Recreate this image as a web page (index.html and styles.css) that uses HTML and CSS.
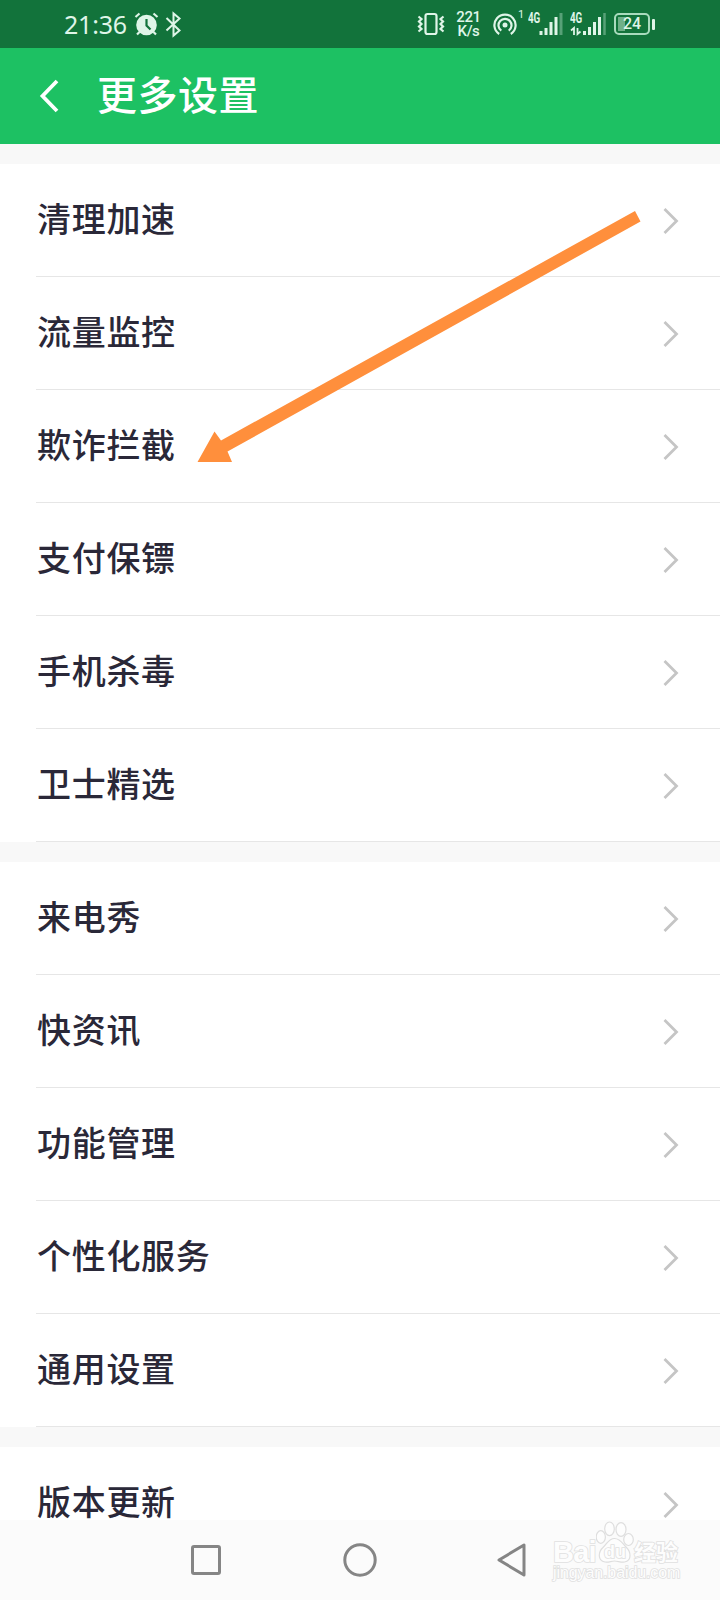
FILE: index.html
```html
<!DOCTYPE html>
<html lang="zh-CN">
<head>
    <meta charset="UTF-8">
    <meta name="viewport" content="width=device-width, initial-scale=1.0">
    <title>更多设置</title>
    <link rel="stylesheet" href="styles.css">
</head>
<body>
    <div class="status-bar">
        <span class="time">21:36</span>
        <svg class="status-icons" width="50" height="48" viewBox="0 0 50 48">
            <!-- alarm -->
            <circle cx="12.500" cy="25" r="10.300" fill="#dff5e8"/>
            <path d="M1.500 17l4-3.500M23.500 17l-4-3.500M5.500 32l-2.500 2.500M19.500 32l2.500 2.500" stroke="#dff5e8" stroke-width="2.200"/>
            <path d="M12.500 19v6.500l4 4" fill="none" stroke="#12733b" stroke-width="2.200"/>
            <!-- bluetooth -->
            <path d="M32.500 18l13 12.500-6 5V13.500l6 5-13 12" fill="none" stroke="#dff5e8" stroke-width="2"/>
        </svg>
        <svg class="status-vibrate" width="28" height="48" viewBox="0 0 28 48">
            <rect x="8.500" y="14" width="11" height="20" rx="2" fill="none" stroke="#dff5e8" stroke-width="2.200"/>
            <path d="M1.500 16.500l3 2.500-2.500 2.500 2.500 2.500-2.500 2.500 2.500 2.500-3 2.500M26.500 16.500l-3 2.500 2.500 2.500-2.500 2.500 2.500 2.500-2.500 2.500 3 2.500" fill="none" stroke="#dff5e8" stroke-width="2.200"/>
        </svg>
        <div class="speed"><span>221</span><span>K/s</span></div>
        <svg class="status-hotspot" width="24" height="48" viewBox="0 0 24 48">
            <circle cx="12" cy="25" r="2.500" fill="#dff5e8"/>
            <path d="M8.300 30.700a6.500 6.500 0 1 1 7.400 0M6.200 34a10.600 10.600 0 1 1 11.600 0" fill="none" stroke="#dff5e8" stroke-width="2.200"/>
        </svg>
        <span class="hotspot-count">1</span>
        <div class="signal">
            <span class="net">4G</span>
            <svg width="36" height="48" viewBox="0 0 36 48">
                <path d="M14 35v-4M19 35v-7M24 35V22M29 35V17" stroke="#dff5e8" stroke-width="3"/>
                <path d="M34 35V13" stroke="#57a177" stroke-width="3"/>
            </svg>
        </div>
        <div class="signal second">
            <span class="net">4G</span>
            <svg width="36" height="48" viewBox="0 0 36 48">
                <path d="M14.500 35v-4M19.500 35v-8M24.500 35V22M29.500 35V17" stroke="#dff5e8" stroke-width="3"/>
                <path d="M34.500 35V13" stroke="#57a177" stroke-width="2.500"/>
                <path d="M1 30.500l3-2.500v7M7.500 28v6l3-2.500" fill="none" stroke="#dff5e8" stroke-width="1.800"/>
            </svg>
        </div>
        <div class="battery"><span class="battery-level"></span><span class="battery-text">24</span></div>
        <span class="battery-tip"></span>
    </div>

    <div class="header">
        <svg class="back" width="20" height="34" viewBox="0 0 20 34">
            <path d="M18 2L3.500 17 18 32" fill="none" stroke="#fff" stroke-width="3.800"/>
        </svg>
        <h1>更多设置</h1>
    </div>

    <div class="settings">
        <div class="group">
            <div class="row"><span>清理加速</span><svg class="chevron" viewBox="0 0 16 28"><path d="M1.500 2l12 12-12 12"/></svg></div>
            <div class="row"><span>流量监控</span><svg class="chevron" viewBox="0 0 16 28"><path d="M1.500 2l12 12-12 12"/></svg></div>
            <div class="row"><span>欺诈拦截</span><svg class="chevron" viewBox="0 0 16 28"><path d="M1.500 2l12 12-12 12"/></svg></div>
            <div class="row"><span>支付保镖</span><svg class="chevron" viewBox="0 0 16 28"><path d="M1.500 2l12 12-12 12"/></svg></div>
            <div class="row"><span>手机杀毒</span><svg class="chevron" viewBox="0 0 16 28"><path d="M1.500 2l12 12-12 12"/></svg></div>
            <div class="row"><span>卫士精选</span><svg class="chevron" viewBox="0 0 16 28"><path d="M1.500 2l12 12-12 12"/></svg></div>
        </div>
        <div class="group">
            <div class="row"><span>来电秀</span><svg class="chevron" viewBox="0 0 16 28"><path d="M1.500 2l12 12-12 12"/></svg></div>
            <div class="row"><span>快资讯</span><svg class="chevron" viewBox="0 0 16 28"><path d="M1.500 2l12 12-12 12"/></svg></div>
            <div class="row"><span>功能管理</span><svg class="chevron" viewBox="0 0 16 28"><path d="M1.500 2l12 12-12 12"/></svg></div>
            <div class="row"><span>个性化服务</span><svg class="chevron" viewBox="0 0 16 28"><path d="M1.500 2l12 12-12 12"/></svg></div>
            <div class="row"><span>通用设置</span><svg class="chevron" viewBox="0 0 16 28"><path d="M1.500 2l12 12-12 12"/></svg></div>
        </div>
        <div class="group last">
            <div class="row"><span>版本更新</span><svg class="chevron" viewBox="0 0 16 28"><path d="M1.500 2l12 12-12 12"/></svg></div>
        </div>
    </div>

    <div class="nav-bar">
        <svg width="32" height="34" viewBox="0 0 32 34"><rect x="2.500" y="3.500" width="27" height="27" rx="1.500"/></svg>
        <svg width="34" height="34" viewBox="0 0 34 34"><circle cx="17" cy="17" r="15.200"/></svg>
        <svg width="30" height="34" viewBox="0 0 30 34"><path d="M27 2v30L2 17z"/></svg>
    </div>

    <!-- arrow pointing at 欺诈拦截 -->
    <svg class="arrow" width="446" height="254" viewBox="0 0 446 254">
        <path d="M437 1l5.500 10.500L29.500 241.500l4.500 10.500H-.5l17-30.500 6.500 9z" fill="#ff8f3c"/>
    </svg>

    <div class="watermark">
        <div class="brand">
            <span class="bai">Bai</span>
            <div class="paw">
                <svg width="38" height="42" viewBox="0 0 38 42">
                    <ellipse cx="4.800" cy="16" rx="4.600" ry="6.300"/>
                    <ellipse cx="13.500" cy="7.800" rx="4.800" ry="6.800"/>
                    <ellipse cx="25" cy="8.500" rx="5" ry="6.800"/>
                    <ellipse cx="32.500" cy="18.500" rx="4.800" ry="6"/>
                    <path d="M18.500 17.500c-6 0-7 5-11.500 9s-6 13 2 14.500c4 .5 6-1 9.500-1s6 1.500 10 1c8-1.500 6-10.500 2-14.500s-6-9-12-9z"/>
                </svg>
                <span class="du">du</span>
            </div>
            <span class="jy">经验</span>
        </div>
        <div class="url">jingyan.baidu.com</div>
    </div>
</body>
</html>
```
FILE: styles.css
```css
* {
    box-sizing: border-box;
}
body {
    margin: 0;
    width: 720px;
    height: 1600px;
    position: relative;
    overflow: hidden;
    display: flex;
    flex-direction: column;
    background-color: #f8f8f8;
    font-family: Roboto, "Noto Sans CJK SC", sans-serif;
}
svg {
    display: block;
    flex-shrink: 0;
}

/* status bar */
.status-bar {
    display: flex;
    align-items: center;
    flex-shrink: 0;
    height: 48px;
    padding-left: 64px;
    background-color: #12733b;
    color: #dff5e8;
}
.time {
    width: 70px;
    font-family: "Noto Sans", sans-serif;
    font-size: 25px;
    line-height: 46px;
    letter-spacing: -0.2px;
    white-space: nowrap;
}
.status-vibrate {
    margin-left: 233px;
}
.speed {
    display: flex;
    flex-direction: column;
    width: 27px;
    margin-left: 10px;
    font-size: 15px;
    font-weight: 500;
    line-height: 14px;
    letter-spacing: -0.4px;
    text-align: center;
}
.status-hotspot {
    margin-left: 11px;
}
.hotspot-count {
    width: 11px;
    font-size: 11px;
    line-height: 12px;
    padding-left: 1px;
    margin-bottom: 18px;
}
.signal {
    position: relative;
    width: 36px;
    margin-left: -1px;
}
.signal.second {
    margin-left: 7px;
}
.net {
    position: absolute;
    left: 1px;
    top: 11px;
    font-size: 14px;
    font-weight: 700;
    line-height: 14px;
    transform: scaleX(0.7);
    transform-origin: left;
}
.signal.second .net {
    left: 0;
}
.battery {
    position: relative;
    width: 36px;
    height: 22px;
    margin-left: 8px;
    border: 2px solid #a9dbbd;
    border-radius: 5px;
    text-align: center;
}
.battery-level {
    position: absolute;
    left: 2px;
    top: 2px;
    width: 7px;
    height: 14px;
    background-color: #6fb088;
}
.battery-text {
    position: relative;
    display: block;
    font-size: 16px;
    font-weight: 500;
    line-height: 18px;
}
.battery-tip {
    width: 3px;
    height: 11px;
    margin-left: 2px;
    border-radius: 1px;
    background-color: #dff5e8;
}

/* title */
.header {
    display: flex;
    align-items: center;
    flex-shrink: 0;
    height: 96px;
    padding-left: 39px;
    background-color: #1dc163;
}
h1 {
    margin: 0 0 6px 38px;
    color: #fff;
    font-family: "KaiTi", "Noto Sans CJK SC", sans-serif;
    font-size: 40px;
    font-weight: 500;
    line-height: 50px;
    letter-spacing: 0.5px;
}

/* list */
.settings {
    display: flex;
    flex-direction: column;
    gap: 20px;
    height: 1376px;
    padding-top: 20px;
}
.group {
    flex-shrink: 0;
    padding-left: 36px;
    background-color: #fff;
}
.group.last {
    height: 73px;
}
.row {
    display: flex;
    align-items: center;
    justify-content: space-between;
    height: 113px;
    padding-right: 40px;
    border-bottom: 1px solid #e6e6e6;
    color: #2a2838;
    font-family: "KaiTi", "Noto Sans CJK SC", sans-serif;
    font-size: 34px;
    font-weight: 500;
    letter-spacing: 0.7px;
}
.last .row {
    border-bottom: none;
}
.row span {
    line-height: 40px;
    margin: 0 0 5px 1px;
}
.chevron {
    width: 16px;
    height: 28px;
    margin: 2px 1px 0 0;
}
.chevron path {
    fill: none;
    stroke: #c5c5c5;
    stroke-width: 2.8;
}

/* navigation */
.nav-bar {
    position: relative;
    display: flex;
    align-items: center;
    justify-content: space-between;
    flex-shrink: 0;
    height: 80px;
    padding: 0 193px 0 190px;
    background-color: #fbfbfb;
}
.nav-bar svg {
    fill: none;
    stroke: #858585;
    stroke-width: 3;
    stroke-linejoin: round;
}

.arrow {
    position: absolute;
    left: 198px;
    top: 210px;
    overflow: visible;
}

/* watermark */
.watermark {
    position: absolute;
    left: 553px;
    top: 1521px;
    width: 130px;
    color: #fdfdfd;
    white-space: nowrap;
}
.brand {
    display: flex;
    height: 42px;
}
.brand span,
.url {
    -webkit-text-stroke: 1.6px #e0e0e0;
    paint-order: stroke fill;
}
.bai {
    width: 43px;
    padding-top: 15px;
    font-family: "Liberation Sans", sans-serif;
    font-size: 29px;
    font-weight: 700;
    line-height: 32px;
    letter-spacing: -0.8px;
}
.paw {
    position: relative;
    width: 38px;
}
.paw svg {
    fill: #fdfdfd;
    stroke: #dedede;
    stroke-width: 1.2;
}
.du {
    position: absolute;
    left: 8px;
    top: 22px;
    font-family: "Liberation Sans", sans-serif;
    font-size: 18px;
    font-weight: 700;
    line-height: 18px;
}
.jy {
    padding-top: 15px;
    font-family: "Noto Sans CJK SC", sans-serif;
    font-size: 22px;
    font-weight: 700;
    line-height: 28px;
}
.url {
    font-family: "Liberation Sans", sans-serif;
    font-size: 16px;
    line-height: 20px;
    letter-spacing: -0.1px;
}
```
